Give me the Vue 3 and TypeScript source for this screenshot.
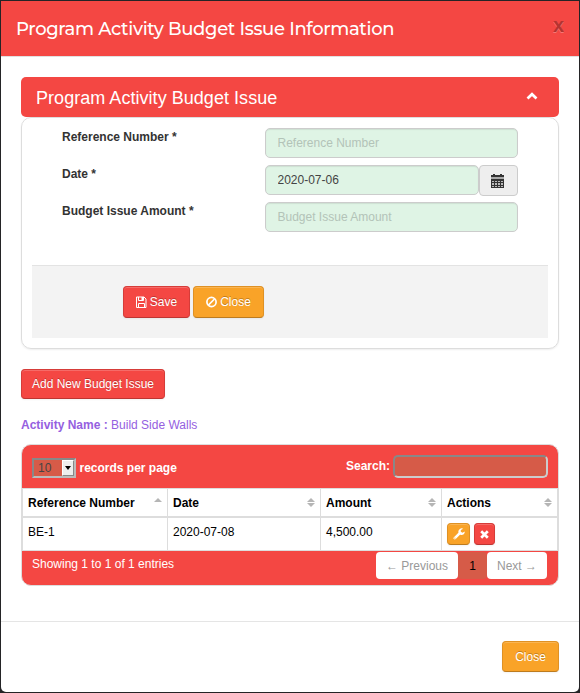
<script setup lang="ts">
import { ref } from 'vue'

interface Issue {
  reference: string
  date: string
  amount: string
}

const reference = ref('')
const date = ref('2020-07-06')
const amount = ref('')
const search = ref('')
const pageSize = ref('10')
const issues: Issue[] = [{ reference: 'BE-1', date: '2020-07-08', amount: '4,500.00' }]
const columns = ['Reference Number', 'Date', 'Amount', 'Actions']
</script>

<template>
  <div class="modal">
    <header class="modal-header">
      <h3>Program Activity Budget Issue Information</h3>
      <button class="dismiss">x</button>
    </header>

    <main class="modal-body">
      <div class="panel-head">
        <span>Program Activity Budget Issue</span>
        <svg class="chevron" width="12" height="8" viewBox="0 0 12 8">
          <path d="M1.500 6.500 6 2.200l4.500 4.300" fill="none" stroke="#fff" stroke-width="2.700" />
        </svg>
      </div>
      <section class="panel">
        <div class="field">
          <label>Reference Number *</label>
          <input v-model="reference" class="text" placeholder="Reference Number" />
        </div>
        <div class="field">
          <label>Date *</label>
          <div class="group">
            <input v-model="date" class="text" />
            <span class="addon">
              <svg width="13" height="14" viewBox="0 0 13 14" shape-rendering="crispEdges">
                <path d="M0 1h13v13H0zM2 0h2v2H2zM9 0h2v2H9z" fill="#333" />
                <path d="M0 3h13v2H0z" fill="#aaa" />
                <path d="M1 7h2v1H1zM4 7h2v1H4zM7 7h2v1H7zM10 7h2v1h-2zM1 9h2v2H1zM4 9h2v2H4zM7 9h2v2H7zM10 9h2v2h-2zM1 12h2v1H1zM4 12h2v1H4zM7 12h2v1H7zM10 12h2v1h-2z" fill="#bbb" />
              </svg>
            </span>
          </div>
        </div>
        <div class="field">
          <label>Budget Issue Amount *</label>
          <input v-model="amount" class="text" placeholder="Budget Issue Amount" />
        </div>
        <div class="actions">
          <button class="btn red save">
            <svg width="11" height="12" viewBox="0 0 11 12">
              <path d="M.5 1h7.500l2 2v8.500H.5zM2.500 1v3.500h5V1M2.500 11.500V7.500h6v4" fill="none" stroke="#fff" />
              <path d="M5.500 1h1.500v3H5.500z" fill="#fff" />
            </svg>
            <span>Save</span>
          </button>
          <button class="btn orange cancel">
            <svg width="11" height="12" viewBox="0 0 11 12">
              <circle cx="5.500" cy="6" r="4.600" fill="none" stroke="#fff" stroke-width="1.700" />
              <path d="m2.500 9 6-6" stroke="#fff" stroke-width="1.700" />
            </svg>
            <span>Close</span>
          </button>
        </div>
      </section>

      <button class="btn red add">Add New Budget Issue</button>
      <p class="activity"><b>Activity Name :</b> Build Side Walls</p>

      <section class="grid">
        <div class="toolbar">
          <div class="length">
            <div class="select">
              <span class="value">{{ pageSize }}</span>
              <span class="drop"><i></i></span>
            </div>
            <b>records per page</b>
          </div>
          <label class="search"><b>Search:</b><input v-model="search" /></label>
        </div>
        <table>
          <colgroup><col class="c1" /><col class="c2" /><col class="c3" /><col class="c4" /></colgroup>
          <thead>
            <tr>
              <th v-for="(name, i) in columns" :key="name">
                <div class="th">
                  <span>{{ name }}</span>
                  <svg width="8" height="9" viewBox="0 0 8 9">
                    <path v-if="i === 0" d="M0 4 4 0l4 4z" fill="#b5b5b5" />
                    <path v-else d="M0 4 4 0l4 4zM0 5h8L4 9z" fill="#b5b5b5" />
                  </svg>
                </div>
              </th>
            </tr>
          </thead>
          <tbody>
            <tr v-for="row in issues" :key="row.reference">
              <td>{{ row.reference }}</td>
              <td>{{ row.date }}</td>
              <td>{{ row.amount }}</td>
              <td class="tools">
                <div>
                  <button class="btn orange mini">
                    <svg width="12" height="12" viewBox="0 0 12 12">
                      <path d="M1.800 10.200 6.800 5.200" stroke="#fff" stroke-width="2.600" stroke-linecap="round" />
                      <path d="M10.200.7A3.400 3.400 0 0 0 5.300 3.800a3.300 3.300 0 0 0 6.300 1.200l.1-1.500-2.200 1.200-1.700-1V2z" fill="#fff" />
                      <circle cx="1.900" cy="10.100" r=".6" fill="#f9a328" />
                    </svg>
                  </button>
                  <button class="btn red mini del">
                    <svg width="9" height="9" viewBox="0 0 9 9">
                      <path d="m1.200 1.200 6.600 6.600m0-6.600L1.200 7.800" stroke="#fff" stroke-width="2.700" />
                    </svg>
                  </button>
                </div>
              </td>
            </tr>
          </tbody>
        </table>
        <div class="bottom">
          <span>Showing 1 to 1 of 1 entries</span>
          <nav>
            <a class="prev">← Previous</a>
            <a class="current">1</a>
            <a class="next">Next →</a>
          </nav>
        </div>
      </section>
    </main>

    <footer class="modal-footer">
      <button class="btn orange close">Close</button>
    </footer>
  </div>
</template>

<style>
body {
  background: #242426;
}
</style>

<style scoped>
* {
  box-sizing: border-box;
}
.modal {
  width: 578px;
  height: 691px;
  margin: 1px;
  background: #fff;
  border-radius: 0 0 5px 5px;
  overflow: hidden;
  font: 12px/20px "Liberation Sans", Arial, sans-serif;
  color: #333;
  display: flex;
  flex-direction: column;
}
svg {
  display: block;
  flex: none;
}
button,
input {
  font: inherit;
}
.modal-header {
  height: 56px;
  background: #f44743;
  border-bottom: 1px solid #e0e0e0;
  display: flex;
  justify-content: space-between;
  padding: 13px 15px 0;
}
h3 {
  margin: 0;
  font: 500 18px/30px Montserrat, Inter, sans-serif;
  letter-spacing: -0.33px;
  color: #fff;
  white-space: nowrap;
}
.dismiss {
  border: 0;
  padding: 0;
  height: 22px;
  background: none;
  color: #000;
  opacity: 0.26;
  font: 700 20px/22px "Liberation Sans", sans-serif;
  text-shadow: 0 1px 0 #fff;
}
.modal-body {
  height: 564px;
  padding: 20px 20px 0;
}
.panel-head {
  height: 40px;
  border-radius: 5px;
  background: #f44743;
  color: #fff;
  font-size: 18px;
  letter-spacing: 0.04px;
  line-height: 42px;
  padding: 0 21px 0 15px;
  display: flex;
  justify-content: space-between;
}
.chevron {
  margin-top: 15px;
}
.panel {
  height: 232px;
  border: 1px solid #ddd;
  border-radius: 10px;
  box-shadow: 0 1px 2px rgba(0, 0, 0, 0.07);
  padding: 10px 10px 0;
}
.field {
  height: 37px;
  padding: 0 30px;
  display: flex;
  justify-content: space-between;
}
.field label {
  font-weight: 700;
  line-height: 18px;
}
.text {
  width: 253px;
  height: 30px;
  padding: 0 11.5px;
  border: 1px solid #ccc;
  border-radius: 5px;
  background: #dff4e5;
  color: #444;
  box-shadow: inset 0 1px 1px rgba(0, 0, 0, 0.08);
  outline: 0;
}
.text::placeholder {
  color: #b3c3b8;
  opacity: 1;
}
.group {
  width: 253px;
  display: flex;
}
.group .text {
  width: 214px;
}
.addon {
  width: 39px;
  height: 31px;
  padding-right: 2px;
  border: 1px solid #ccc;
  border-radius: 4px;
  background: #eee;
  display: flex;
  align-items: center;
  justify-content: center;
}
.actions {
  height: 73px;
  margin-top: 26px;
  border-top: 1px solid #e3e3e3;
  background: #f3f3f3;
  padding: 20px 0 0 91px;
  display: flex;
  gap: 3px;
}
.btn {
  height: 30px;
  padding: 0;
  border: 1px solid;
  border-radius: 4px;
  color: #fff;
  text-shadow: 0 -1px 0 rgba(0, 0, 0, 0.25);
  box-shadow: inset 0 1px 0 rgba(255, 255, 255, 0.2), 0 1px 2px rgba(0, 0, 0, 0.05);
  display: flex;
  align-items: center;
  justify-content: center;
  gap: 3px;
}
.red {
  background: #f44743;
  border-color: #d63c39 #d63c39 #bd3532;
}
.orange {
  background: #f9a328;
  border-color: #df9124 #df9124 #bd7b1e;
}
.save {
  width: 67px;
  height: 32px;
}
.cancel {
  width: 71px;
  height: 32px;
}
.add {
  width: 144px;
  margin-top: 20px;
}
.activity {
  margin: 16px 0 9px;
  color: #9560df;
}
.grid {
  height: 142px;
  border: 1px solid #ddd;
  border-radius: 10px;
  background: #f44743;
  overflow: hidden;
}
.toolbar {
  height: 43px;
  color: #fff;
  display: flex;
  justify-content: space-between;
  padding: 10px 10px 0;
}
.length {
  display: flex;
  gap: 3.5px;
  padding-top: 3px;
}
.select {
  width: 44px;
  height: 20px;
  border: 2px solid;
  border-color: #888 #bbb #bbb #888;
  background: #d65b48;
  color: #444;
  display: flex;
  justify-content: space-between;
  line-height: 17px;
}
.value {
  padding-left: 4px;
}
.drop {
  width: 12px;
  height: 16px;
  background: #eee;
  border: 1px solid;
  border-color: #fff #888 #888 #fff;
  display: flex;
  align-items: center;
  justify-content: center;
}
.drop i {
  border: 3px solid transparent;
  border-width: 4px 3.5px 0;
  border-top-color: #000;
}
.search {
  display: flex;
  gap: 3px;
  line-height: 22px;
}
.search input {
  width: 155px;
  height: 23px;
  border: 2px solid;
  border-color: #888 #ccc #ccc #888;
  border-radius: 5px;
  background: #d65b48;
  padding: 0 4px;
  outline: 0;
}
table {
  width: 536px;
  table-layout: fixed;
  border-spacing: 0;
  background: #fff;
  color: #000;
  border: 1px solid #ddd;
  border-width: 1px 1px 0;
}
.c1 {
  width: 145px;
}
.c2 {
  width: 153px;
}
.c3 {
  width: 121px;
}
th,
td {
  padding: 0 5px;
  text-align: left;
  border-right: 1px solid #ddd;
}
th:last-child,
td:last-child {
  border-right: 0;
}
th {
  height: 29px;
  border-bottom: 2px solid #ddd;
}
.th {
  display: flex;
  justify-content: space-between;
  align-items: center;
}
td {
  height: 33px;
  vertical-align: top;
  padding-top: 4px;
  border-bottom: 1px solid #ddd;
}
.tools div {
  display: flex;
  gap: 4px;
  padding-top: 1px;
}
.mini {
  width: 23px;
  height: 22px;
}
.mini.del {
  width: 21px;
}
.bottom {
  height: 34px;
  color: #fff;
  display: flex;
  justify-content: space-between;
  padding: 1px 11px 0 10px;
}
.bottom > span {
  padding-top: 2px;
}
nav {
  height: 27px;
  display: flex;
  line-height: 28px;
  text-align: center;
}
nav a {
  border-radius: 4px;
  background: #fff;
  color: #999;
}
.prev {
  width: 82px;
}
.next {
  width: 60px;
}
nav .current {
  width: 29px;
  background: #d65b48;
  color: #000;
}
.modal-footer {
  flex: 1;
  border-top: 1px solid #e5e5e5;
  padding: 19px 20px 0;
  display: flex;
  justify-content: flex-end;
}
.close {
  width: 57px;
  height: 31px;
}
</style>
